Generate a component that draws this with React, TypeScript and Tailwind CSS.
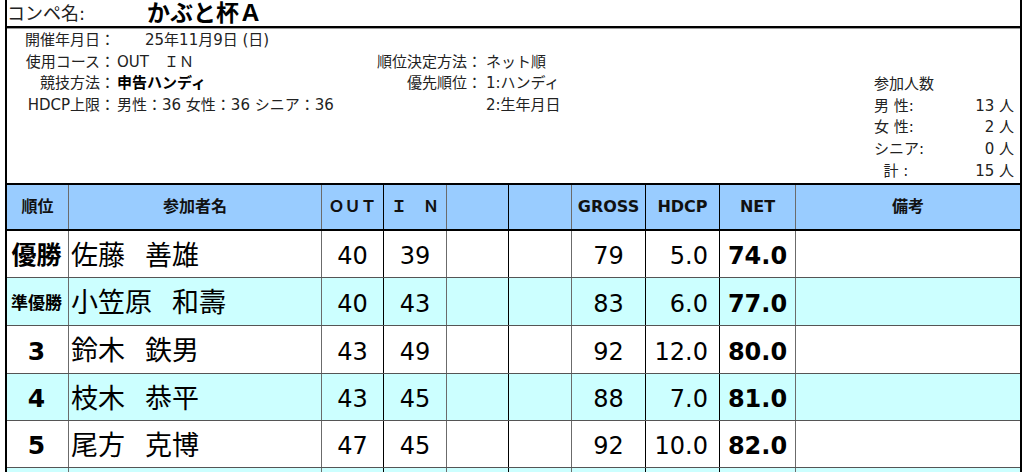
import React from 'react';

type Row = {
  rank: string;
  name: string;
  out: string;
  inn: string;
  gross: string;
  hdcp: string;
  net: string;
};

const ROWS: Row[] = [
  { rank: '優勝', name: '佐藤　善雄', out: '40', inn: '39', gross: '79', hdcp: '5.0', net: '74.0' },
  { rank: '準優勝', name: '小笠原　和壽', out: '40', inn: '43', gross: '83', hdcp: '6.0', net: '77.0' },
  { rank: '3', name: '鈴木　鉄男', out: '43', inn: '49', gross: '92', hdcp: '12.0', net: '80.0' },
  { rank: '4', name: '枝木　恭平', out: '43', inn: '45', gross: '88', hdcp: '7.0', net: '81.0' },
  { rank: '5', name: '尾方　克博', out: '47', inn: '45', gross: '92', hdcp: '10.0', net: '82.0' },
];

const ROW_HEIGHTS = ['h-[47px]', 'h-[48px]', 'h-[48px]', 'h-[47px]', 'h-[47px]'];

const GRID = 'grid grid-cols-[62px_253px_62px_63px_62px_63px_74px_74px_76px_224px]';

// right border of each column (the lines alternate grey / black in the sheet)
const COL_BORDER = [
  'border-r border-[#6b6b6b]',
  'border-r border-[#6b6b6b]',
  'border-r border-black',
  'border-r border-[#6b6b6b]',
  'border-r border-black',
  'border-r border-[#6b6b6b]',
  'border-r border-black',
  'border-r border-black',
  'border-r border-[#6b6b6b]',
  '',
];

const HEADERS = ['順位', '参加者名', 'ＯＵＴ', 'Ｉ　Ｎ', '', '', 'GROSS', 'HDCP', 'NET', '備考'];

const INFO_LEFT: [string, string, boolean?][] = [
  ['開催年月日：', '25年11月9日 (日)'],
  ['使用コース：', 'OUT　ＩＮ'],
  ['競技方法：', '申告ハンディ', true],
  ['HDCP上限：', '男性：36 女性：36 シニア：36'],
];

const COUNTS: [string, string][] = [
  ['男 性:', '13 人'],
  ['女 性:', '2 人'],
  ['シニア:', '0 人'],
  ['\u00a0\u00a0計 :', '15 人'],
];

const HeaderRow: React.FC = () => (
  <div className={`${GRID} h-[46px] bg-[#99ccff] border-b-2 border-black`}>
    {HEADERS.map((h, i) => (
      <div
        key={i}
        className={`${COL_BORDER[i]} flex items-center justify-center text-[16px] font-bold text-[#111]`}
      >
        {h}
      </div>
    ))}
  </div>
);

const ResultRow: React.FC<{ row: Row; idx: number }> = ({ row, idx }) => {
  const bg = idx % 2 === 1 ? 'bg-[#ccffff]' : 'bg-white';
  const small = row.rank === '準優勝';
  const [family, given] = row.name.split('　');
  return (
    <div className={`${GRID} ${ROW_HEIGHTS[idx]} ${bg} border-b border-[#555]`}>
      <div className={`${COL_BORDER[0]} flex items-center justify-center pt-[4px] font-bold ${small ? 'text-[17px] pr-[2px]' : 'text-[25px] pr-[2px]'}`}>
        {row.rank}
      </div>
      <div className={`${COL_BORDER[1]} flex items-center pl-[2px] pt-[4px] text-[27px]`}>
        <span>{family}</span>
        <span className="inline-block w-[20px]" />
        <span>{given}</span>
      </div>
      <div className={`${COL_BORDER[2]} flex items-center justify-center pt-[4px] text-[24px]`}>{row.out}</div>
      <div className={`${COL_BORDER[3]} flex items-center justify-center pt-[4px] text-[24px]`}>{row.inn}</div>
      <div className={COL_BORDER[4]} />
      <div className={COL_BORDER[5]} />
      <div className={`${COL_BORDER[6]} flex items-center justify-center pt-[4px] text-[24px]`}>{row.gross}</div>
      <div className={`${COL_BORDER[7]} flex items-center justify-end pr-[11px] pt-[4px] text-[24px]`}>{row.hdcp}</div>
      <div className={`${COL_BORDER[8]} flex items-center justify-center pt-[4px] text-[24px] font-bold`}>{row.net}</div>
      <div />
    </div>
  );
};

export default function App() {
  return (
    <div className="w-[1024px] h-[472px] overflow-hidden bg-white text-black [font-family:'DejaVu_Sans','Noto_Sans_CJK_JP',sans-serif]">
      <div className="ml-[5px] w-[1017px] h-full border-x-2 border-black">
        {/* title */}
        <div className="h-[28px] flex items-end border-b-2 border-black">
          <span className="w-[140px] text-[18px] leading-[24px] text-[#222]">コンペ名:</span>
          <span className="text-[23px] font-bold leading-[26px]">かぶと杯Ａ</span>
        </div>
        <div className="h-px bg-[#999]" />

        {/* meta info */}
        <div className="h-[156px] flex border-b-2 border-black text-[15px] leading-[21.7px] text-[#222]">
          <div className="w-[355px] pt-[1px] grid grid-cols-[108px_auto] content-start">
            {INFO_LEFT.map(([label, value, bold]) => (
              <React.Fragment key={label}>
                <div className="text-right">{label}</div>
                <div className={`${label === '開催年月日：' ? 'pl-[30px]' : 'pl-[2px]'} ${bold ? 'font-bold text-black' : ''}`}>
                  {value}
                </div>
              </React.Fragment>
            ))}
          </div>
          <div className="pt-[22.7px] grid grid-cols-[120px_auto] content-start">
            <div className="text-right">順位決定方法：</div>
            <div className="pl-[4px]">ネット順</div>
            <div className="text-right">優先順位：</div>
            <div className="pl-[4px]">1:ハンディ</div>
            <div />
            <div className="pl-[4px]">2:生年月日</div>
          </div>
          <div className="ml-auto mr-[6px] pt-[45px] w-[140px]">
            <div>参加人数</div>
            {COUNTS.map(([label, value]) => (
              <div key={label} className="flex justify-between">
                <span>{label}</span>
                <span>{value}</span>
              </div>
            ))}
          </div>
        </div>

        {/* results table */}
        <HeaderRow />
        {ROWS.map((r, i) => (
          <ResultRow key={r.name} row={r} idx={i} />
        ))}
        <div className={`${GRID} h-[47px] bg-[#ccffff]`}>
          {COL_BORDER.map((b, i) => (
            <div key={i} className={b} />
          ))}
        </div>
      </div>
    </div>
  );
}
